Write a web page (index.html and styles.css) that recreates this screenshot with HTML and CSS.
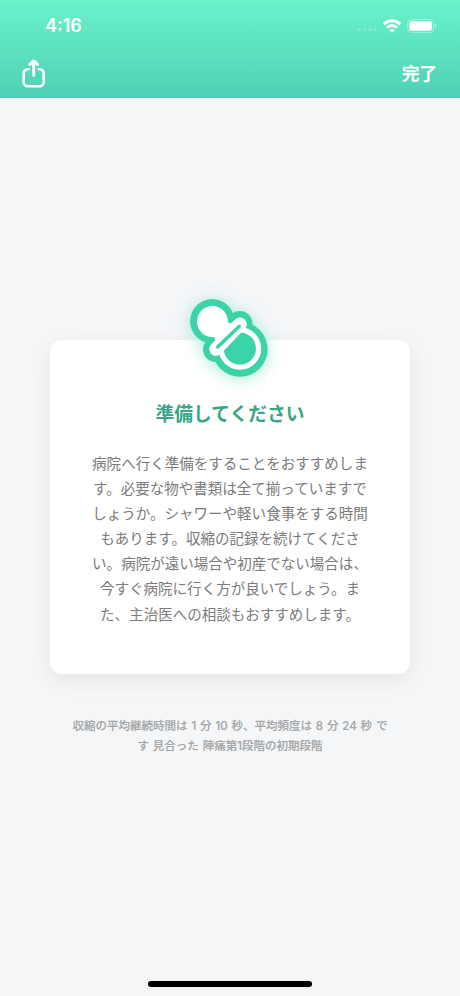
FILE: index.html
```html
<!DOCTYPE html>
<html lang="ja">
<head>
<meta charset="utf-8">
<title>準備してください</title>
<link rel="stylesheet" href="styles.css">
</head>
<body>
<div class="screen">
  <header class="header">
    <div class="status">
      <span class="time">4:16</span>
      <div class="indicators">
        <span class="signal"><i></i><i></i><i></i><i></i></span>
        <svg class="wifi" width="18" height="14" viewBox="0 0 18 14" fill="none" stroke="#fff">
          <path d="M.9 5.1a11.6 11.6 0 0 1 16.2 0" stroke-width="2.9"/>
          <path d="M4 8.7a7.1 7.1 0 0 1 10 0" stroke-width="2.6"/>
          <path d="M9 13.6 6.5 11.2a3.5 3.5 0 0 1 5 0z" fill="#fff" stroke="none"/>
        </svg>
        <svg class="battery" width="30" height="14" viewBox="0 0 30 14">
          <rect x=".6" y=".6" width="26" height="12.8" rx="3.8" fill="none" stroke="#fff" stroke-opacity=".38"/>
          <rect x="2.3" y="2.3" width="22.6" height="9.4" rx="2.3" fill="#fff"/>
          <path d="M28 4.8c2 .8 2 3.6 0 4.4z" fill="#fff" fill-opacity=".45"/>
        </svg>
      </div>
    </div>
    <nav class="nav">
      <svg class="share" width="24" height="30" viewBox="0 0 24 30" fill="none" stroke="#fff" stroke-width="2.6" stroke-linecap="round" stroke-linejoin="round">
        <path d="M6.6 10.3h-.9a4 4 0 0 0-4 4v8.9a4 4 0 0 0 4 4h12a4 4 0 0 0 4-4v-8.9a4 4 0 0 0-4-4h-.9"/>
        <path d="M11.7 16.5V2.5M7.9 5.4l3.8-3.5 3.8 3.5" stroke-width="2.9"/>
      </svg>
      <span class="done">完了</span>
    </nav>
  </header>
  <main class="content">
    <section class="card">
      <svg class="pacifier" width="120" height="120" viewBox="0 0 120 120">
        <g class="pacifier-base" fill="#3bd4a9" stroke="#3bd4a9" stroke-linecap="round">
          <circle cx="42.3" cy="41.3" r="22.2" stroke="none"/>
          <circle cx="70" cy="69.2" r="27.6" stroke="none"/>
          <path d="M45.5 69.5 70 43.5" stroke-width="25"/>
        </g>
        <circle cx="42.4" cy="41.5" r="15.4" fill="#fff"/>
        <path d="M57.4 38Q57 44 61 43.3L66 39V48L50 66H41L45 60.5Q46 56 39 56.5Z" fill="#fff"/>
        <circle cx="69.9" cy="68.5" r="18.7" fill="none" stroke="#fff" stroke-width="5.2"/>
        <path d="M46 69.2 70 44.1" stroke="#fff" stroke-width="13.4" stroke-linecap="round"/>
        <path d="M47.7 67 69.3 46.3" stroke="#3bd4a9" stroke-width="3.5" stroke-linecap="round"/>
      </svg>
      <h1 class="title">準備してください</h1>
      <p class="advice">病院へ行く準備をすることをおすすめしま<br>す。必要な物や書類は全て揃っていますで<br>しょうか。シャワーや軽い食事をする時間<br>もあります。収縮の記録を続けてくださ<br>い。病院が遠い場合や初産でない場合は、<br>今すぐ病院に行く方が良いでしょう。ま<br>た、主治医への相談もおすすめします。</p>
    </section>
    <p class="summary">収縮の平均継続時間は 1 分 10 秒、平均頻度は 8 分 24 秒 で<br>す 見合った 陣痛第1段階の初期段階</p>
  </main>
  <div class="home"></div>
</div>
</body>
</html>
```
FILE: styles.css
```css
* { box-sizing: border-box; margin: 0; padding: 0; }
body { background: #f4f6f8; font-family: Inter, "Noto Sans CJK JP", sans-serif; }
.screen { width: 460px; height: 996px; display: flex; flex-direction: column; overflow: hidden; }
.header { height: 98px; flex: none; color: #fff; background: linear-gradient(#69f3ca, #50d0b5); }
.status { height: 51px; padding: 0 23px 0 45px; display: flex; justify-content: space-between; align-items: center; }
.time { font-size: 18px; font-weight: 600; line-height: 20px; }
.indicators { display: flex; align-items: center; }
.signal { display: flex; gap: 2px; margin: 8px 6px 0 0; }
.signal i { width: 3.4px; height: 3.4px; border-radius: 50%; background: rgba(255,255,255,.2); }
.wifi { margin-right: 6px; }
.nav { height: 45px; padding: 0 23px 0 22px; display: flex; justify-content: space-between; align-items: center; }
.done { font-size: 17.5px; font-weight: 500; line-height: 24px; -webkit-text-stroke: .4px #fff; }
.content { flex: 1; padding: 242px 50px 0; }
.card { position: relative; height: 333.5px; padding: 61px 30px 0; border-radius: 12px; background: #fff; box-shadow: 0 6px 22px rgba(0,0,0,.07); text-align: center; }
.pacifier { position: absolute; left: 120px; top: -60px; overflow: visible; }
.pacifier-base { filter: drop-shadow(0 2px 8px rgba(59,212,169,.42)); }
.title { color: #3aa587; font-size: 18.75px; font-weight: 600; line-height: 28px; }
.advice { margin-top: 22.6px; color: #7b7b7b; font-size: 14.52px; font-weight: 400; line-height: 25.15px; white-space: nowrap; }
.summary { margin-top: 42px; color: #a4a6a8; font-size: 11.5px; font-weight: 500; line-height: 20px; text-align: center; white-space: nowrap; word-spacing: .8px; -webkit-text-stroke: .15px #a4a6a8; }
.home { flex: none; width: 164px; height: 6px; margin: 0 auto 9px; border-radius: 3px; background: #000; }
```
